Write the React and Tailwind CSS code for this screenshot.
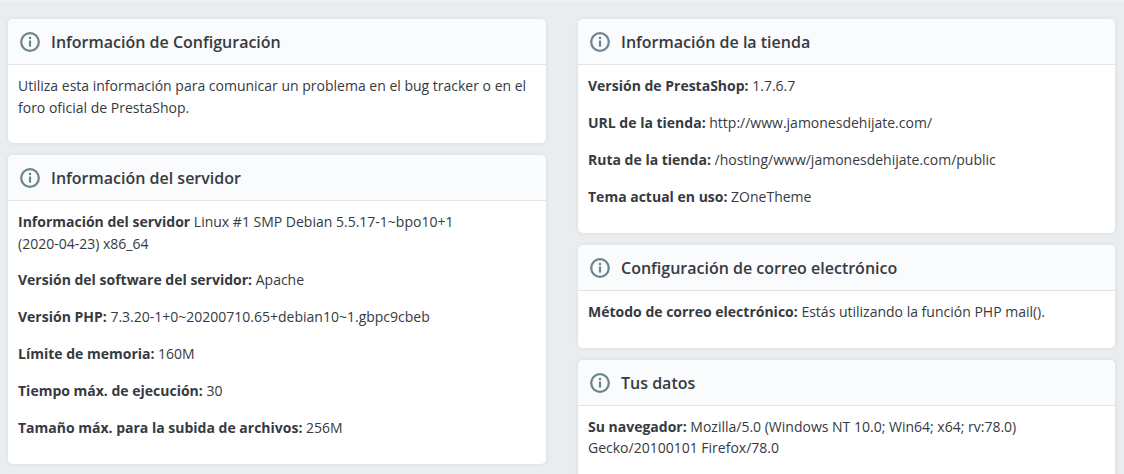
import React from 'react';

const InfoIcon = () => (
  <svg width="20" height="20" viewBox="0 0 20 20" fill="none" className="shrink-0">
    <circle cx="10" cy="10" r="8.8" stroke="#6c868e" strokeWidth="2.3" />
    <circle cx="10" cy="6" r="1.3" fill="#6c868e" />
    <rect x="8.9" y="8.5" width="2.2" height="6.2" fill="#6c868e" />
  </svg>
);

const Card = ({ title, bodyClass = 'pt-[10px] pb-[10px]', children }) => (
  <div className="bg-white rounded-[5px] shadow-[0_0_4px_rgba(0,0,0,0.08)] overflow-hidden">
    <div className="h-[46px] bg-[#fafbfc] border-b border-[#dfe5e8] flex items-center pl-[12px] gap-[11px]">
      <InfoIcon />
      <h3 className="text-[16px] font-semibold text-[#363a41]">{title}</h3>
    </div>
    <div className={`px-[10px] ${bodyClass}`}>{children}</div>
  </div>
);

const Row = ({ label, children }) => (
  <p className="mb-[14.8px]">
    <strong className="font-bold">{label}</strong> {children}
  </p>
);

export default function App() {
  return (
    <div className="h-[474px] overflow-hidden bg-[#eaedef] border-t-2 border-[#f0f2f3] font-['Open_Sans',sans-serif] text-[14px] leading-[22px] text-[#363a41]">
      <div className="grid grid-cols-[538px_537px] gap-x-[32px] pl-[8px] pt-[17px]">
        <div className="flex flex-col gap-[12px]">
          <Card title="Información de Configuración">
            <p className="mb-[14px]">
              Utiliza esta información para comunicar un problema en el bug tracker o en el foro oficial de PrestaShop.
            </p>
          </Card>
          <Card title="Información del servidor" bodyClass="pt-[9.6px] pb-[10.6px]">
            <Row label="Información del servidor">
              Linux #1 SMP Debian 5.5.17-1~bpo10+1 <span className="whitespace-nowrap">(2020-04-23)</span> x86_64
            </Row>
            <Row label="Versión del software del servidor:">Apache</Row>
            <Row label="Versión PHP:">7.3.20-1+0~20200710.65+debian10~1.gbpc9cbeb</Row>
            <Row label="Límite de memoria:">160M</Row>
            <Row label="Tiempo máx. de ejecución:">30</Row>
            <Row label="Tamaño máx. para la subida de archivos:">256M</Row>
          </Card>
        </div>
        <div className="flex flex-col gap-[12px]">
          <Card title="Información de la tienda" bodyClass="pt-[10.4px] pb-[10.6px]">
            <Row label="Versión de PrestaShop:">1.7.6.7</Row>
            <Row label="URL de la tienda:">http://www.jamonesdehijate.com/</Row>
            <Row label="Ruta de la tienda:">/hosting/www/jamonesdehijate.com/public</Row>
            <Row label="Tema actual en uso:">ZOneTheme</Row>
          </Card>
          <Card title="Configuración de correo electrónico" bodyClass="pt-[10px] pb-[10.2px]">
            <Row label="Método de correo electrónico:">Estás utilizando la función PHP mail().</Row>
          </Card>
          <Card title="Tus datos" bodyClass="pt-[9.6px] pb-[10px] leading-[21.6px]">
            <Row label="Su navegador:">Mozilla/5.0 (Windows NT 10.0; Win64; x64; rv:78.0) Gecko/20100101 Firefox/78.0</Row>
          </Card>
        </div>
      </div>
    </div>
  );
}
